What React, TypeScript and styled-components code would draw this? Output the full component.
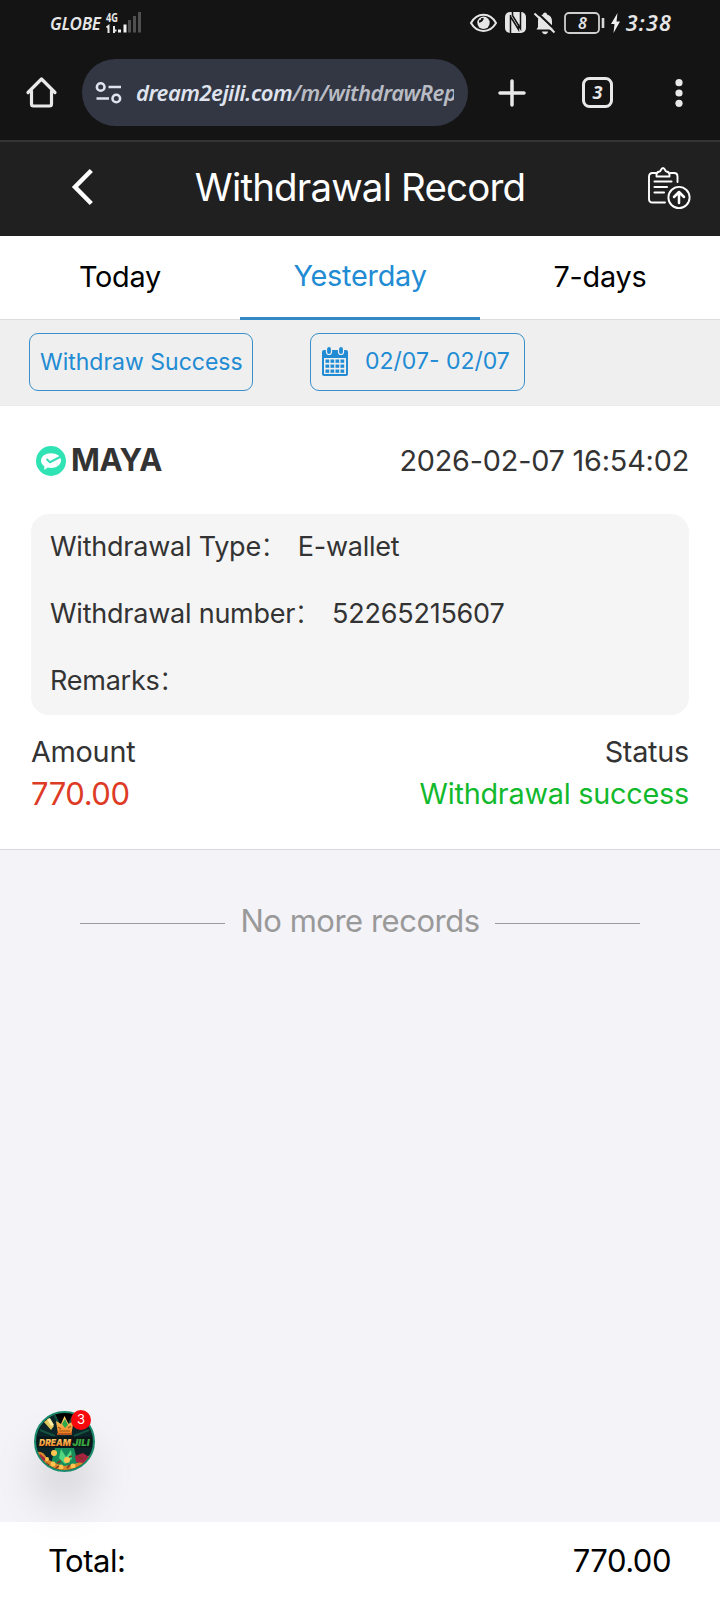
import React from "react";
import styled, { createGlobalStyle } from "styled-components";

const GlobalStyle = createGlobalStyle`
  * { box-sizing: border-box; }
  body { margin: 0; background: #f3f3f8; }
`;

const blue = "#218bd3";
const systemFont = `"Noto Sans", "Open Sans", sans-serif`;

const Screen = styled.div`
  width: 720px;
  height: 1600px;
  display: flex;
  flex-direction: column;
  position: relative;
  overflow: hidden;
  background: #f3f3f8;
  color: #333;
  font-family: Inter, "Noto Sans CJK SC", sans-serif;
`;

const StatusBar = styled.div`
  height: 46px;
  flex: none;
  display: flex;
  justify-content: space-between;
  background: #141414;
  color: #e6e6e6;
  font-family: ${systemFont};
  font-style: italic;
  padding: 0 48px 0 50px;
`;

const StatusGroup = styled.div`
  display: flex;
  align-items: center;
  height: 45px;
`;

const Carrier = styled.span`
  font-size: 17px;
  font-weight: 600;
  letter-spacing: -0.2px;
  line-height: 20px;
  padding-top: 3px;
  width: 56px;
`;

const Clock = styled.span`
  font-size: 21.5px;
  font-weight: 600;
  letter-spacing: 1.2px;
  line-height: 24px;
  margin-left: 6px;
  padding-top: 1px;
`;

const BrowserBar = styled.div`
  height: 96px;
  flex: none;
  display: flex;
  align-items: flex-start;
  padding: 13px 0 0 26px;
  background: #141414;
  border-bottom: 2px solid #333435;
`;

const BarIcon = styled.div<{ $w: number; $ml?: number }>`
  width: ${(p) => p.$w}px;
  margin-left: ${(p) => p.$ml ?? 0}px;
  height: 67px;
  display: flex;
  align-items: center;
  justify-content: center;
  flex: none;
`;

const AddressPill = styled.div`
  width: 386px;
  height: 67px;
  margin-left: 25px;
  border-radius: 34px;
  background: #333743;
  display: flex;
  align-items: center;
  padding: 0 14px 0 13px;
  flex: none;
`;

const Url = styled.div`
  flex: 1;
  margin-left: 14px;
  margin-bottom: 2px;
  overflow: hidden;
  white-space: nowrap;
  font-family: ${systemFont};
  font-style: italic;
  font-weight: 600;
  font-size: 22px;
  letter-spacing: -0.48px;
  line-height: 34px;
  color: #b9bcc4;
`;

const Host = styled.span`
  color: #dfe3ee;
`;

const Header = styled.header`
  height: 94px;
  flex: none;
  display: grid;
  grid-template-columns: 124px 1fr 124px;
  align-items: center;
  padding-bottom: 4px;
  background: #202020;
  color: #fff;
`;

const HeaderAction = styled.div<{ $right?: boolean }>`
  display: flex;
  justify-content: ${(p) => (p.$right ? "flex-end" : "flex-start")};
  padding: ${(p) => (p.$right ? "2px 29px 0 0" : "0 0 0 71px")};
`;

const Title = styled.h1`
  margin: 0;
  font-weight: 400;
  font-size: 38.5px;
  line-height: 46px;
  letter-spacing: -0.85px;
  text-align: center;
`;

const Tabs = styled.nav`
  height: 84px;
  flex: none;
  display: flex;
  background: #fff;
`;

const Tab = styled.div<{ $active?: boolean }>`
  flex: 1;
  display: flex;
  align-items: center;
  justify-content: center;
  font-size: 28.8px;
  letter-spacing: -0.22px;
  padding-bottom: ${(p) => (p.$active ? 3 : 2)}px;
  color: ${(p) => (p.$active ? blue : "#000")};
  border-bottom: ${(p) => (p.$active ? "3px solid #3388c6" : "1px solid #dcdcdc")};
`;

const Filters = styled.div`
  height: 86px;
  flex: none;
  display: flex;
  gap: 57px;
  padding: 13px 29px;
  background: #efefef;
  border-bottom: 1px solid #ebebeb;
`;

const FilterButton = styled.div<{ $w: number }>`
  width: ${(p) => p.$w}px;
  height: 58px;
  border: 1px solid #3b8fcb;
  border-radius: 9px;
  display: flex;
  align-items: center;
  padding: 0 10px;
  font-size: 23px;
  white-space: nowrap;
  color: ${blue};
`;

const DateRange = styled.span`
  margin-left: 16px;
  padding-bottom: 2px;
`;

const Card = styled.section`
  height: 444px;
  flex: none;
  background: #fff;
  padding: 33px 31px 0;
  border-bottom: 1px solid #d9d9dd;
`;

const CardHead = styled.div`
  height: 42px;
  display: flex;
  align-items: center;
  padding-left: 5px;
`;

const Wallet = styled.strong`
  font-size: 31px;
  font-weight: 700;
  letter-spacing: -0.5px;
  margin-left: 5px;
  padding-bottom: 2px;
  flex: 1;
`;

const Timestamp = styled.span`
  font-size: 28.8px;
  letter-spacing: -0.2px;
`;

const Details = styled.div`
  margin-top: 33px;
  height: 201px;
  border-radius: 18px;
  background: #f5f5f5;
  padding-left: 19px;
  display: flex;
  flex-direction: column;
`;

const DetailRow = styled.div`
  height: 67px;
  display: flex;
  align-items: center;
  gap: 11px;
  padding-bottom: 2px;
  font-size: 27px;
  letter-spacing: -0.23px;
  line-height: 40px;
`;

const Colon = styled.span`
  font-weight: 300;
  margin-left: -1px;
`;

const Summary = styled.div`
  display: flex;
  justify-content: space-between;
  margin-top: 16px;
`;

const SummaryColumn = styled.div<{ $right?: boolean }>`
  display: flex;
  flex-direction: column;
  text-align: ${(p) => (p.$right ? "right" : "left")};
`;

const Label = styled.span`
  font-size: 28.8px;
  letter-spacing: -0.25px;
  line-height: 42px;
`;

const Amount = styled.span`
  font-size: 31px;
  letter-spacing: -0.45px;
  line-height: 42px;
  color: #dd3b25;
`;

const Success = styled.span`
  font-size: 28.8px;
  letter-spacing: -0.23px;
  line-height: 42px;
  color: #12b92c;
`;

const EndOfList = styled.div`
  flex: 1;
  display: flex;
  align-items: flex-start;
  padding: 48px 80px 0;
`;

const EndRow = styled.div`
  flex: 1;
  display: flex;
  align-items: center;
  gap: 15px;
  font-size: 31px;
  letter-spacing: -0.48px;
  line-height: 46px;
  white-space: nowrap;
  color: #999;
`;

const Rule = styled.i`
  flex: 1;
  height: 1px;
  margin-top: 5px;
  background: #9c9ca0;
`;

const TotalBar = styled.footer`
  height: 78px;
  flex: none;
  display: flex;
  align-items: center;
  justify-content: space-between;
  padding: 0 49px 2px 48px;
  background: #fff;
  color: #000;
  font-size: 31px;
  letter-spacing: -0.48px;
`;

const FloatingLogo = styled.div`
  position: absolute;
  left: 34px;
  top: 1410px;
  width: 61px;
  height: 62px;
  border-radius: 50%;
  box-shadow: 0 32px 44px rgba(0, 0, 0, 0.13);
`;

const Badge = styled.span`
  position: absolute;
  left: 37px;
  top: 0;
  width: 20px;
  height: 20px;
  border-radius: 50%;
  background: #f6080c;
  color: #fff;
  font-size: 13px;
  line-height: 18px;
  text-align: center;
`;

const Svg = styled.svg`
  display: block;
  flex: none;
  overflow: visible;
`;

const SignalIcon = () => (
  <Svg width="36" height="24" viewBox="0 0 36 24">
    <text x="0" y="10.500" fontSize="12.500" fontWeight="700" fontStyle="normal" fill="#e6e6e6" textLength="12" lengthAdjust="spacingAndGlyphs">4G</text>
    <path d="M.5 16.500 2.500 15v7M8 15v7M8 19.500h2.500" stroke="#e6e6e6" strokeWidth="2" fill="none" />
    <path d="M12 18.500h3v3h-3zM17.500 13.500h3v8h-3z" fill="#f2f2f2" />
    <path d="M22 9h3v12.500h-3zM27 5h3v16.500h-3zM32 1h3v20.500h-3z" fill="#505050" />
  </Svg>
);

const EyeIcon = () => (
  <Svg width="27" height="20" viewBox="0 0 27 20">
    <path d="M1 10C7-1 20-1 26 10 20 20.500 7 20.500 1 10Z" fill="none" stroke="#e6e6e6" strokeWidth="2" />
    <circle cx="13.500" cy="9.800" r="6.200" fill="#e6e6e6" />
    <path d="M9 8.500a3.500 3.500 0 0 0 3.500-3.500" fill="none" stroke="#141414" strokeWidth="2.400" />
  </Svg>
);

const NfcIcon = () => (
  <Svg width="21" height="21" viewBox="0 0 21 21">
    <rect width="21" height="21" rx="5" fill="#e6e6e6" />
    <path d="M5.500 3v18M5.500 4.500 13.500 17.500V12M7.500 3.500V0M7.500 3.500 15.500 16.500V0" stroke="#141414" strokeWidth="1.500" fill="none" />
  </Svg>
);

const MutedBellIcon = () => (
  <Svg width="22" height="22" viewBox="0 0 22 22">
    <path d="M2.500 17.500 4 15V9.500C4 5 6 3 9 2.500 9-.300 13-.300 13 2.500c3.500.800 5 3.500 5 7v5l2 3Z" fill="#e6e6e6" />
    <path d="M8 19.500h6c-.500 3.500-5.500 3.500-6 0Z" fill="#e6e6e6" />
    <path d="M2.500 0 22 18.500" stroke="#141414" strokeWidth="2.200" />
    <path d="M.5 1.500 20.500 20.500" stroke="#e6e6e6" strokeWidth="2" />
  </Svg>
);

const BatteryIcon = () => (
  <Svg width="41" height="22" viewBox="0 0 41 22">
    <rect x="1" y="1" width="34" height="20" rx="4" fill="none" stroke="#cfcfcf" strokeWidth="1.800" />
    <path d="M39 6v10" stroke="#d8d8d8" strokeWidth="2.600" />
    <text x="14" y="16.500" fontSize="16" fontWeight="600" fill="#e6e6e6">8</text>
  </Svg>
);

const BoltIcon = () => (
  <Svg width="9" height="20" viewBox="0 0 9 20">
    <path d="M6.500 0 0 11h3.500L2.500 20 9 8.500H5.500Z" fill="#f0f0f0" />
  </Svg>
);

const HomeIcon = () => (
  <Svg width="32" height="31" viewBox="0 0 32 31">
    <path d="M2 15.500 15.500 2 29 15.500M5.500 14v13q0 2 2 2h16q2 0 2-2V14" fill="none" stroke="#e9e9e9" strokeWidth="3.200" strokeLinecap="round" strokeLinejoin="round" />
  </Svg>
);

const TuneIcon = () => (
  <Svg width="27" height="22" viewBox="0 0 27 22">
    <g fill="none" stroke="#dfe3ee" strokeWidth="2.600">
      <circle cx="5.700" cy="5" r="3.800" />
      <circle cx="21.300" cy="16.500" r="3.800" />
      <path d="M13.500 5H26M1.500 16.500H14" />
    </g>
  </Svg>
);

const PlusIcon = () => (
  <Svg width="28" height="28" viewBox="0 0 28 28">
    <path d="M14 2v24M2 14h24" stroke="#e9e9e9" strokeWidth="3.500" strokeLinecap="round" />
  </Svg>
);

const TabCountIcon = () => (
  <Svg width="31" height="31" viewBox="0 0 31 31">
    <rect x="1.500" y="1.500" width="28" height="28" rx="6" fill="none" stroke="#e9e9e9" strokeWidth="3" />
    <text x="15.500" y="22" textAnchor="middle" fontFamily="Noto Sans" fontStyle="italic" fontWeight="700" fontSize="18" fill="#e9e9e9">3</text>
  </Svg>
);

const MoreIcon = () => (
  <Svg width="8" height="28" viewBox="0 0 8 28">
    <g fill="#e9e9e9">
      <circle cx="4" cy="3.700" r="3.600" />
      <circle cx="4" cy="14" r="3.600" />
      <circle cx="4" cy="24.300" r="3.600" />
    </g>
  </Svg>
);

const BackIcon = () => (
  <Svg width="24" height="36" viewBox="0 0 24 36">
    <path d="M20.300 1.500 4 18l16.300 16.500" fill="none" stroke="#fff" strokeWidth="4.500" />
  </Svg>
);

const ClipboardIcon = () => (
  <Svg width="43" height="43" viewBox="0 0 43 43">
    <g fill="none" stroke="#fff" strokeWidth="1.900" strokeLinecap="round" strokeLinejoin="round">
      <path d="M8 6H4.500Q1 6 1 9.500V32q0 3.500 3.500 3.500H17M22.500 6H26q3.500 0 3.500 3.500V15" />
      <path d="M8.500 9.500Q8 5 11.500 4.500q.800-.200 1.200-1.200 2.300-4.500 4.600 0 .400 1 1.200 1.200 3.500.500 3 5Z" />
      <path d="M6.500 14.500h17M6.500 20H19M6.500 25.500H16" strokeWidth="2.100" />
      <circle cx="31" cy="30.500" r="10.600" />
      <path d="M31 36V25.500M26 30l5-5 5 5" strokeWidth="2.500" />
    </g>
  </Svg>
);

const CalendarIcon = () => (
  <Svg width="28" height="30" viewBox="0 0 28 30">
    <path d="M3 3h22q2 0 2 2v22q0 2-2 2H3q-2 0-2-2V5q0-2 2-2Z" fill={blue} />
    <path d="M3 11h22v16H3z" fill="#efefef" />
    {[8, 20].map((x) => (
      <rect key={x} x={x - 2.500} y="-.5" width="5" height="8" rx="2.500" fill={blue} stroke="#efefef" strokeWidth="1.200" />
    ))}
    {[12.500, 17.500, 22.500].map((y) =>
      [4.500, 9.500, 14.500, 19.500].map((x) => <rect key={`${x}-${y}`} x={x} y={y} width="3.700" height="3.300" fill={blue} />)
    )}
  </Svg>
);

const WalletMark = styled(Svg)`
  margin-top: 2px;
`;

const MayaIcon = () => (
  <WalletMark width="30" height="30" viewBox="0 0 30 30">
    <circle cx="15" cy="15" r="15" fill="#2fe3b5" />
    <path d="M15 7.200c6 0 10 3 10 7.300s-4.500 7.500-10 7.500c-1.300 0-2.400-.100-3.300-.400L8.300 24v-3.800C6.200 18.900 5 17 5 14.800c0-4.500 4.300-7.600 10-7.600Z" fill="#fff" />
    <path d="m10.500 13 3.500 3.200L25 10.500" fill="none" stroke="#36ddb6" strokeWidth="2" />
  </WalletMark>
);

const DreamLogo = () => (
  <Svg width="61" height="62" viewBox="0 0 61 62">
    <defs>
      <clipPath id="disc"><circle cx="30.500" cy="31.500" r="28.500" /></clipPath>
      <linearGradient id="gold" x1="0" y1="0" x2="0" y2="1">
        <stop offset="0" stopColor="#ffe27a" />
        <stop offset="1" stopColor="#f0781b" />
      </linearGradient>
    </defs>
    <circle cx="30.500" cy="31.500" r="29.500" fill="#0a2428" stroke="#1b8b6c" strokeWidth="2" />
    <g clipPath="url(#disc)">
      <path d="M20 4 30 24 41 2M6 20l15 6M55 20l-15 6" stroke="#14523f" strokeWidth="2" />
      <path d="m10 12 4-3 6 7-3 4Z" fill="#e2c75c" />
      <path d="m13 9 3-1 4 7-3 1Z" fill="#fff0a5" />
      <path d="m22 11 5 3 3.500-8 4 8 5-3-2 13H24Z" fill="url(#gold)" />
      <path d="m28 14 3-5 3 6-3 3Z" fill="#2da84a" />
      <path d="m24 17 3 2M34 18l3-2M25 21h11" stroke="#9c5b1c" strokeWidth="1.200" />
      <path d="M23 23h15v2H23z" fill="#b75621" />
      <path d="M21 38H40L45 58H16Z" fill="#178d5b" />
      <path d="m27 39 5 8 5-7 1 9-7 5-6-6Z" fill="#54d681" />
      <path d="M2 42q8-2 11 7l8 4 8 3 9-1 10-4 9-7v20H4Z" fill="#d98529" />
      <path d="m6 44 6 5-3 4-5-4ZM41 46l8-3 6 4-5 6-8-1Z" fill="#a62341" />
      <g fill="#ffc550">
        <circle cx="20" cy="43" r="3" /><circle cx="33" cy="50" r="3" /><circle cx="19" cy="54" r="2.500" />
        <circle cx="39" cy="56" r="2.500" /><circle cx="13" cy="49" r="2" /><circle cx="27" cy="57" r="2.500" />
      </g>
      <path d="m23 53 4-2M44 47l5 2M35 47l3-1M12 53l3 2M22 58l3-2M33 58l3-3" stroke="#82351f" strokeWidth="1.500" />
    </g>
    <path d="M3 26.500h55v11H3z" fill="#0b1618" />
    <g fontFamily="Inter" fontStyle="italic" fontWeight="900" fontSize="9.500">
      <text x="5" y="35.500" fill="url(#gold)" textLength="32" lengthAdjust="spacingAndGlyphs">DREAM</text>
      <text x="38.500" y="35.500" fill="#38a840" textLength="17" lengthAdjust="spacingAndGlyphs">JILI</text>
    </g>
  </Svg>
);

const Gap = styled.span<{ $w: number }>`
  width: ${(p) => p.$w}px;
  flex: none;
`;

const details = [
  { label: "Withdrawal Type", value: "E-wallet" },
  { label: "Withdrawal number", value: "52265215607" },
  { label: "Remarks", value: "" },
];

export default function App() {
  return (
    <Screen>
      <GlobalStyle />
      <StatusBar>
        <StatusGroup>
          <Carrier>GLOBE</Carrier>
          <SignalIcon />
        </StatusGroup>
        <StatusGroup>
          <EyeIcon />
          <Gap $w={8} />
          <NfcIcon />
          <Gap $w={8} />
          <MutedBellIcon />
          <Gap $w={8} />
          <BatteryIcon />
          <Gap $w={6} />
          <BoltIcon />
          <Clock>3:38</Clock>
        </StatusGroup>
      </StatusBar>
      <BrowserBar>
        <BarIcon $w={31}><HomeIcon /></BarIcon>
        <AddressPill>
          <TuneIcon />
          <Url><Host>dream2ejili.com</Host>/m/withdrawRep</Url>
        </AddressPill>
        <BarIcon $w={28} $ml={30}><PlusIcon /></BarIcon>
        <BarIcon $w={31} $ml={56}><TabCountIcon /></BarIcon>
        <BarIcon $w={8} $ml={62}><MoreIcon /></BarIcon>
      </BrowserBar>
      <Header>
        <HeaderAction><BackIcon /></HeaderAction>
        <Title>Withdrawal Record</Title>
        <HeaderAction $right><ClipboardIcon /></HeaderAction>
      </Header>
      <Tabs>
        <Tab>Today</Tab>
        <Tab $active>Yesterday</Tab>
        <Tab>7-days</Tab>
      </Tabs>
      <Filters>
        <FilterButton $w={224}>Withdraw Success</FilterButton>
        <FilterButton $w={215}>
          <CalendarIcon />
          <DateRange>02/07- 02/07</DateRange>
        </FilterButton>
      </Filters>
      <Card>
        <CardHead>
          <MayaIcon />
          <Wallet>MAYA</Wallet>
          <Timestamp>2026-02-07 16:54:02</Timestamp>
        </CardHead>
        <Details>
          {details.map(({ label, value }) => (
            <DetailRow key={label}>
              <span>{label}<Colon>：</Colon></span>
              {value && <span>{value}</span>}
            </DetailRow>
          ))}
        </Details>
        <Summary>
          <SummaryColumn>
            <Label>Amount</Label>
            <Amount>770.00</Amount>
          </SummaryColumn>
          <SummaryColumn $right>
            <Label>Status</Label>
            <Success>Withdrawal success</Success>
          </SummaryColumn>
        </Summary>
      </Card>
      <EndOfList>
        <EndRow><Rule />No more records<Rule /></EndRow>
      </EndOfList>
      <TotalBar>
        <span>Total:</span>
        <span>770.00</span>
      </TotalBar>
      <FloatingLogo>
        <DreamLogo />
        <Badge>3</Badge>
      </FloatingLogo>
    </Screen>
  );
}
